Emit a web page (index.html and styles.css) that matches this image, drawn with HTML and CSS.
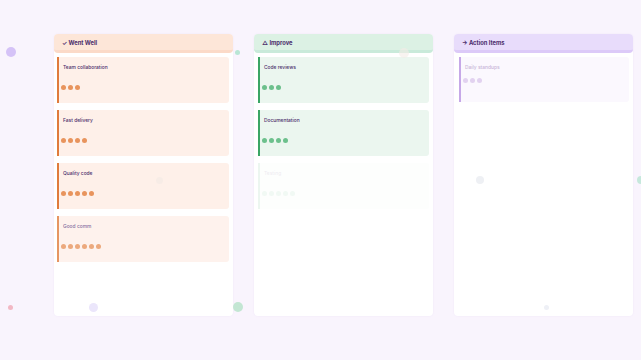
FILE: index.html
```html
<!DOCTYPE html>
<html lang="en">
<head>
    <meta charset="UTF-8">
    <meta name="viewport" content="width=device-width, initial-scale=1.0">
    <title>Retro Board</title>
    <link rel="stylesheet" href="styles.css">
</head>
<body>
    <div class="bubbles">
        <span class="bubble b1"></span>
        <span class="bubble b2"></span>
        <span class="bubble b3"></span>
        <span class="bubble b4"></span>
        <span class="bubble b5"></span>
        <span class="bubble b6"></span>
        <span class="bubble b7"></span>
        <span class="bubble b8"></span>
        <span class="bubble b9"></span>
        <span class="bubble b10"></span>
    </div>

    <div class="board">
        <!-- Went well -->
        <div class="column well">
            <div class="column-head">✓ Went Well</div>
            <div class="card">
                <div class="card-title">Team collaboration</div>
                <div class="votes"><span></span><span></span><span></span></div>
            </div>
            <div class="card">
                <div class="card-title">Fast delivery</div>
                <div class="votes"><span></span><span></span><span></span><span></span></div>
            </div>
            <div class="card">
                <div class="card-title">Quality code</div>
                <div class="votes"><span></span><span></span><span></span><span></span><span></span></div>
            </div>
            <div class="card faded">
                <div class="card-title">Good comm</div>
                <div class="votes"><span></span><span></span><span></span><span></span><span></span><span></span></div>
            </div>
        </div>

        <!-- Improve -->
        <div class="column improve">
            <div class="column-head">△ Improve</div>
            <div class="card">
                <div class="card-title">Code reviews</div>
                <div class="votes"><span></span><span></span><span></span></div>
            </div>
            <div class="card">
                <div class="card-title">Documentation</div>
                <div class="votes"><span></span><span></span><span></span><span></span></div>
            </div>
            <div class="card ghost">
                <div class="card-title">Testing</div>
                <div class="votes"><span></span><span></span><span></span><span></span><span></span></div>
            </div>
        </div>

        <!-- Action items -->
        <div class="column action">
            <div class="column-head">→ Action Items</div>
            <div class="card dim">
                <div class="card-title">Daily standups</div>
                <div class="votes short"><span></span><span></span><span></span></div>
            </div>
        </div>
    </div>
</body>
</html>
```

FILE: styles.css
```css
body {
    font-family: Inter, "Noto Sans", sans-serif;
    margin: 0;
    padding: 0;
    background-color: #f9f4fd;
    width: 641px;
    height: 360px;
    overflow: hidden;
    position: relative;
}

.board {
    display: flex;
    gap: 21px;
    padding: 34px 0 0 54px;
}

.column {
    width: 179px;
    height: 282px;
    background: #ffffff;
    border-radius: 4px;
    display: flex;
    flex-direction: column;
    gap: 7px;
    box-shadow: 0 0 2px rgba(180, 150, 210, 0.12);
}

.column-head {
    height: 15px;
    padding: 1px 0 0 8px;
    display: flex;
    align-items: center;
    font-size: 5.8px;
    font-weight: 700;
    color: #4b2d6b;
    border-radius: 4px;
    margin-bottom: -3px;
}

.well .column-head {
    background: #fde6d8;
    border-bottom: 3px solid #fbdac8;
}

.improve .column-head {
    background: #dcf1e4;
    border-bottom: 3px solid #c9eada;
}

.action .column-head {
    background: #e8dcfb;
    border-bottom: 3px solid #dccaf8;
}

.card {
    height: 46px;
    margin: 0 4px 0 3px;
    border-left: 2px solid #e07b3c;
    border-radius: 0 3px 3px 0;
    background: #fef0e9;
    padding: 0 0 0 4px;
    box-sizing: border-box;
}

.improve .card {
    margin-left: 4px;
    border-left-color: #3aa565;
    background: #ebf6ef;
}

.action .card {
    margin-left: 5px;
    height: 45px;
    border-left-color: #c6a8e8;
    background: #fbf8fe;
}

.card-title {
    padding-top: 7px;
    font-size: 4.9px;
    line-height: 6px;
    font-weight: 500;
    color: #4b2d6b;
}

.votes {
    display: flex;
    gap: 2px;
    margin: 15px 0 0 -2px;
}

.votes span {
    width: 5px;
    height: 5px;
    border-radius: 50%;
    background: #e8945d;
}

.improve .votes span {
    background: #6cc08c;
}

.card.faded {
    opacity: 0.8;
}

.card.faded .card-title {
    color: #6a4c8a;
}

.card.ghost {
    opacity: 0.09;
}

.action .card-title {
    color: #c8b6d8;
}

.votes.short {
    margin-top: 8px;
}

.action .votes span {
    background: #e2d2f0;
}

/* decorative floating dots */
.bubbles {
    position: absolute;
    inset: 0;
    pointer-events: none;
    z-index: 2;
}

.bubble {
    position: absolute;
    border-radius: 50%;
}

.b1 { left: 6px; top: 47px; width: 10px; height: 10px; background: #d5c2f7; }
.b2 { left: 235px; top: 50px; width: 5px; height: 5px; background: #b9e6d5; }
.b3 { left: 8px; top: 305px; width: 5px; height: 5px; background: #f2b8c4; }
.b4 { left: 89px; top: 303px; width: 9px; height: 9px; background: #ebe6fb; }
.b5 { left: 233px; top: 302px; width: 10px; height: 10px; background: #c3e6d3; }
.b6 { left: 399px; top: 48px; width: 10px; height: 10px; background: #f4ebe6; opacity: 0.6; }
.b7 { left: 476px; top: 176px; width: 8px; height: 8px; background: #eef0f4; }
.b8 { left: 637px; top: 176px; width: 8px; height: 8px; background: #c6e8dc; }
.b9 { left: 544px; top: 305px; width: 5px; height: 5px; background: #eef0f6; }
.b10 { left: 156px; top: 177px; width: 7px; height: 7px; background: #f7ece6; }
```
